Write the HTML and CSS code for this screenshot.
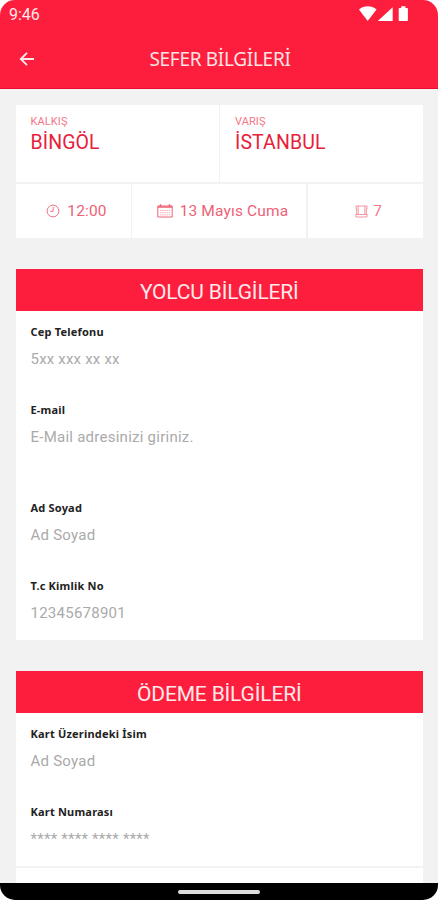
FILE: index.html
```html
<!DOCTYPE html>
<html lang="tr">
<head>
<meta charset="utf-8">
<title>Sefer Bilgileri</title>
<link rel="stylesheet" href="styles.css">
</head>
<body>
<div class="phone">
  <header class="header">
    <div class="status">
      <span class="clock">9:46</span>
      <svg class="status-icons" width="50" height="16" viewBox="0 0 50 16" fill="currentColor">
        <path d="M0 3.500C5-.7 12.500-.7 17.500 3.500L8.700 15z"/>
        <path d="M33.700 1.200V15H18.800z"/>
        <path d="M42.200.3h4.200v1.800h1.700q.8 0 .8.8v11.300q0 .8-.8.8h-7.600q-.8 0-.8-.8V2.900q0-.8.8-.8h1.700z"/>
      </svg>
    </div>
    <div class="bar">
      <svg class="back" width="16" height="16" viewBox="0 0 16 16" fill="none" stroke="currentColor" stroke-width="1.900"><path d="M15 8H2M8 1.800L1.800 8 8 14.200"/></svg>
      <h1>SEFER BİLGİLERİ</h1>
    </div>
  </header>
  <main>
    <section class="trip">
      <div class="route">
        <div class="stop"><small>KALKIŞ</small><strong>BİNGÖL</strong></div>
        <div class="stop"><small>VARIŞ</small><strong>İSTANBUL</strong></div>
      </div>
      <div class="facts">
        <div class="fact">
          <svg width="14" height="14" viewBox="0 0 14 14" fill="none" stroke="currentColor" stroke-width=".9"><circle cx="7" cy="7" r="5.900"/><path d="M7.200 3v4.300H4.300"/></svg>
          <span>12:00</span>
        </div>
        <div class="fact">
          <svg width="16" height="14" viewBox="0 0 16 14" fill="none" stroke="currentColor"><path d="M.8 2h14.400v11H.8z"/><path d="M.8 3h14.400M3.500.2v3M12.500.2v3" stroke-width="1.500"/><path d="M3 6.500h10M3 8.700h10M3 10.900h10" stroke-width=".8" stroke-dasharray="1.500 .7" opacity=".65"/></svg>
          <span>13 Mayıs Cuma</span>
        </div>
        <div class="fact seat">
          <svg width="13" height="13" viewBox="0 0 13 13" fill="none" stroke="currentColor" stroke-width=".8"><path d="M1 1h11v3h-.7v5h.7v3H1V9h.7V4H1zM3.200 1v8.500h6.600V1M1.500 9.500h1.700M9.800 9.500h1.700"/></svg>
          <span>7</span>
        </div>
      </div>
    </section>
    <section class="card">
      <h2>YOLCU BİLGİLERİ</h2>
      <div class="field"><label>Cep Telefonu</label><p class="phone-value">5xx xxx xx xx</p></div>
      <div class="field tall"><label>E-mail</label><p>E-Mail adresinizi giriniz.</p></div>
      <div class="field"><label>Ad Soyad</label><p>Ad Soyad</p></div>
      <div class="field last"><label>T.c Kimlik No</label><p>12345678901</p></div>
    </section>
    <section class="card pay">
      <h2>ÖDEME BİLGİLERİ</h2>
      <div class="field"><label>Kart Üzerindeki İsim</label><p>Ad Soyad</p></div>
      <div class="field ruled"><label>Kart Numarası</label><p>**** **** **** ****</p></div>
    </section>
  </main>
  <footer class="nav"><i></i></footer>
</div>
</body>
</html>
```
FILE: styles.css
```css
* { box-sizing: border-box; }
body { margin: 0; background: #fff; font-family: Roboto, "Liberation Sans", sans-serif; }
h1, h2, p { margin: 0; font-weight: 400; }
svg { display: block; flex: none; }
.phone { width: 438px; height: 900px; display: flex; flex-direction: column; overflow: hidden; border-radius: 15px; background: #f2f2f3; }
.header { flex: none; height: 89px; background: #fc1e3c; color: #fff; border-bottom: 1px solid #e90d2b; }
.status { display: flex; justify-content: space-between; align-items: center; height: 28px; padding: 0 29px 0 9px; }
.clock { font-size: 16px; line-height: 30px; padding-top: 1px; color: #ffe9eb; }
.bar { display: grid; grid-template-columns: 40px 1fr 40px; align-items: center; height: 61px; }
.back { margin-left: 19px; color: #ffe9eb; }
.bar h1 { font: 400 19px/30px "Noto Sans", sans-serif; letter-spacing: -.3px; text-align: center; color: #ffe2e5; white-space: nowrap; padding-left: 2px; }
main { flex: 1; min-height: 0; overflow: hidden; padding: 16px 15px 0 15.5px; display: flex; flex-direction: column; gap: 31px; }
.trip { flex: none; height: 133px; display: flex; flex-direction: column; gap: 2px; }
.route { display: grid; grid-template-columns: 203px 1fr; gap: 1.5px; height: 77px; }
.stop { background: #fff; padding: 10px 15px; display: flex; flex-direction: column; }
.stop small { font-size: 11px; line-height: 14px; letter-spacing: .1px; color: #f57587; }
.stop strong { font-size: 19.5px; font-weight: 400; line-height: 28px; letter-spacing: .1px; color: #e8203c; }
.facts { display: grid; grid-template-columns: 115px 174px 1fr; gap: 1.5px; height: 54px; }
.fact { background: #fff; display: flex; align-items: center; justify-content: center; gap: 7px; padding-left: 7px; font-size: 15.5px; color: #ee6276; letter-spacing: .15px; white-space: nowrap; }
.fact.seat { gap: 5px; color: #f27a8a; }
.card { flex: none; background: #fff; }
.card h2 { height: 42px; background: #fc1e3c; color: #ffe9eb; text-align: center; font-size: 21px; line-height: 46px; letter-spacing: -.17px; margin-bottom: 13px; }
.field { height: 78px; padding: 0 15px; }
.field.tall { height: 98px; }
.field.last { height: 62px; }
.field label { display: block; font: 700 11px/16px "Noto Sans", sans-serif; color: #222; letter-spacing: .2px; }
.field p { font-size: 15px; line-height: 20px; padding-top: 9px; color: #aaa; letter-spacing: .25px; }
.field .phone-value { letter-spacing: .2px; }
.ruled { border-bottom: 2px solid #f2f2f3; height: 64px; }
.pay { flex: 1 0 250px; }
.nav { flex: none; height: 17px; background: #000; display: flex; justify-content: center; padding-top: 7px; }
.nav i { width: 82px; height: 4px; border-radius: 2px; background: #ddd; }
```
